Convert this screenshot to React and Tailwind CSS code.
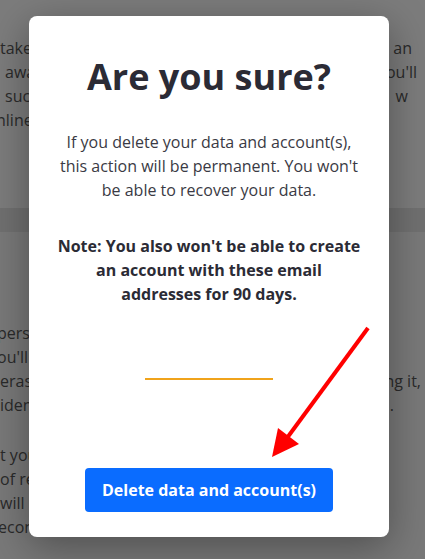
export default function App() {
  const font = { fontFamily: '"Open Sans", "Noto Sans", sans-serif' };
  const Line = ({ l, r, lc = "", rc = "" }) => (
    <div className="flex justify-between whitespace-nowrap h-6 leading-6">
      <span className={lc}>{l}</span>
      <span className={rc}>{r}</span>
    </div>
  );
  return (
    <div className="relative w-[425px] h-[559px] overflow-hidden bg-[#7c7c7c]" style={font}>
      {/* background page */}
      <div className="flex flex-col text-[16px] text-[#2a2a2a]">
        <div className="pt-[36px] h-[208px]">
          <Line l="take" r="an" rc="mr-[13px]" />
          <Line l="awa" lc="ml-[5px]" r="ou'll" rc="mr-[8px]" />
          <Line l="suc" lc="ml-[5px]" r="w" rc="mr-[17px]" />
          <Line l="nline" lc="-ml-[4px]" r="" />
        </div>
        <div className="h-[24px] bg-[#707070]" />
        <div className="pt-[89px] bg-[#797979] h-[327px]">
          <Line l="pers" lc="-ml-[3px]" r="" />
          <Line l="ou'll" lc="-ml-[3px]" r="" />
          <Line l="eras" r="ng it," rc="mr-[4px]" />
          <Line l="iden" r="." rc="mr-[31px]" />
          <div className="h-[26px]" />
          <Line l="t you" r="" />
          <Line l="of re" r="" />
          <Line l="will n" r="" />
          <Line l="econ" lc="-ml-[2px]" r="" />
        </div>
      </div>

      {/* modal */}
      <div className="absolute left-[29px] top-[16px] w-[360px] h-[521px] bg-white rounded-[8px] shadow-[0_10px_40px_rgba(0,0,0,0.35)] flex flex-col items-center pt-[39px]">
        <h1 className="text-[36px] leading-[44px] font-bold text-[#2b2b35]">Are you sure?</h1>
        <p className="mt-[31px] text-[16px] leading-6 text-[#3a3a44] text-center w-[302px]">
          If you delete your data and account(s), this action will be permanent. You won't be able to recover your data.
        </p>
        <p className="mt-[32px] text-[16px] leading-6 font-bold text-[#2b2b35] text-center w-[306px]">
          Note: You also won't be able to create an account with these email addresses for 90 days.
        </p>
        <div className="mt-[72px] w-[128px] h-[2px] bg-[#f0a31b]" />
        <button className="mt-[88px] w-[248px] h-[44px] rounded-[4px] bg-[#0a6cff] text-white text-[16px] font-bold">
          Delete data and account(s)
        </button>
      </div>

      {/* red arrow annotation */}
      <svg className="absolute left-0 top-0" width="425" height="559" viewBox="0 0 425 559">
        <line x1="368" y1="328" x2="287" y2="438" stroke="#ff0000" strokeWidth="4" />
        <polygon points="272,457 278,428 299,444" fill="#ff0000" />
      </svg>
    </div>
  );
}
